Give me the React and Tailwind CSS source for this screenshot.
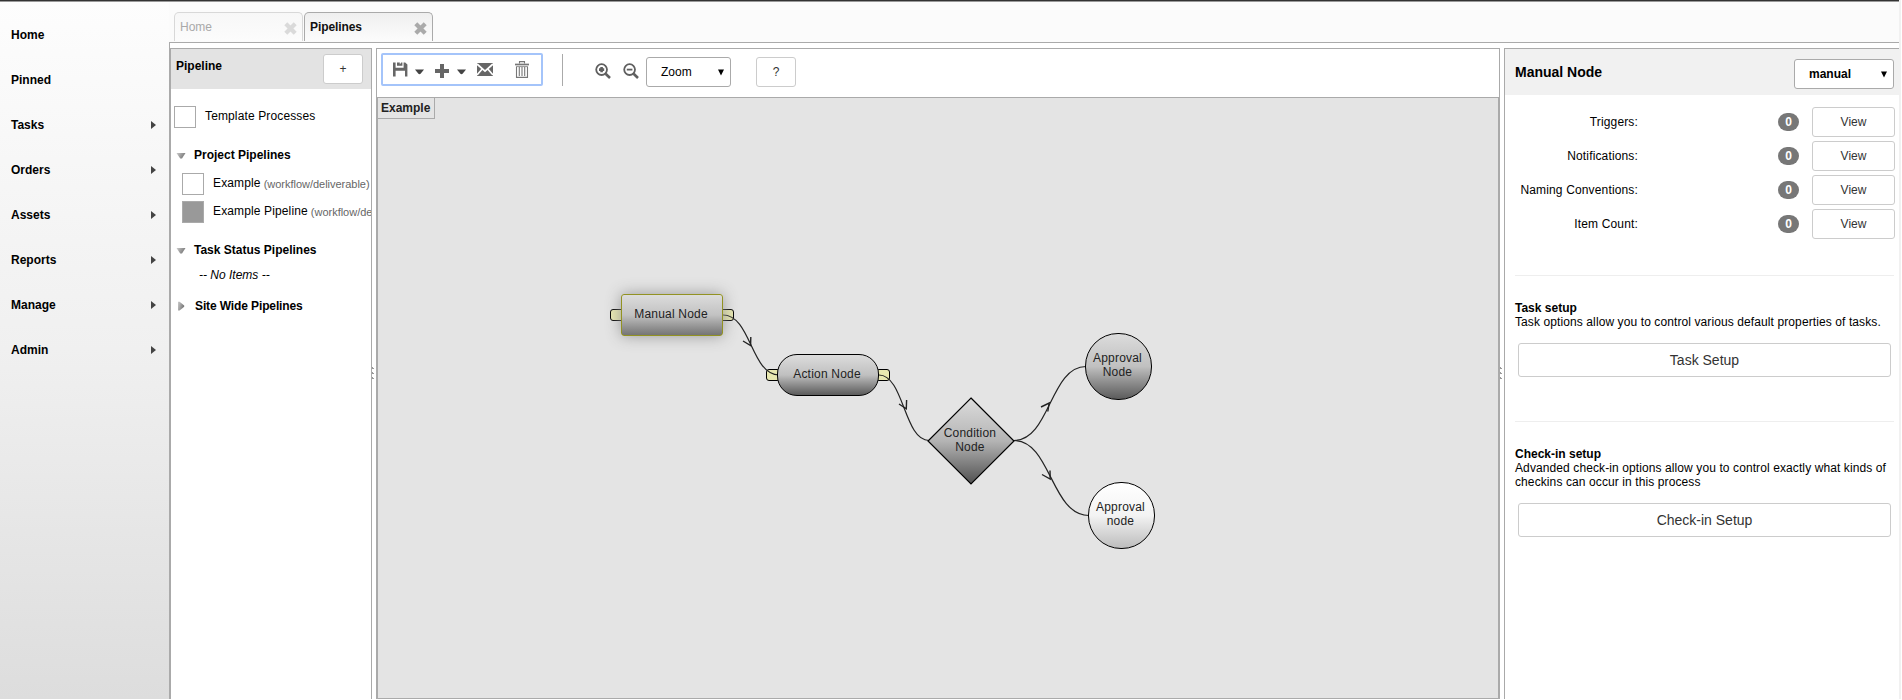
const NAV = [
  ['Home', false], ['Pinned', false], ['Tasks', true], ['Orders', true],
  ['Assets', true], ['Reports', true], ['Manage', true], ['Admin', true],
];

function Cross({ color }) {
  return (
    <svg width="13" height="13" viewBox="0 0 13 13">
      <path d="M1.8 1.8L11.2 11.2M11.2 1.8L1.8 11.2" stroke={color} strokeWidth="4.2" />
    </svg>
  );
}

function Tab({ label, active }) {
  return (
    <div
      className={
        'flex h-[29px] w-[129px] items-center justify-between rounded-t-[5px] border border-b-0 pl-[5px] pr-[5px] ' +
        (active
          ? 'border-[#aaa] bg-linear-to-b from-[#efefef] to-[#fcfcfc] font-bold tracking-[-0.08px] text-[#111]'
          : 'border-[#d8d8d8] bg-linear-to-b from-[#f7f7f7] to-[#fcfcfc] text-[#a9a9a9]')
      }
    >
      <span className="leading-[14px]">{label}</span>
      <span className="pt-[3px]"><Cross color={active ? '#aaa' : '#dadada'} /></span>
    </div>
  );
}

function Button({ className, children }) {
  return (
    <button className={'flex items-center justify-center rounded-[3px] border border-[#ccc] bg-white text-[#333] ' + className}>
      {children}
    </button>
  );
}

function Select({ className, children }) {
  return (
    <div className={'flex h-[30px] items-center justify-between rounded-[3px] border border-[#aaa] bg-white pl-[14px] pr-[6px] text-black ' + className}>
      <span>{children}</span>
      <svg width="6" height="7" viewBox="0 0 6 7"><path d="M0 0.5h6L3 6.5z" fill="#000" /></svg>
    </div>
  );
}

function Twisty({ open }) {
  return (
    <svg width="10" height="10" viewBox="0 0 10 10">
      <defs>
        <linearGradient id="tw" x1="0" y1="0" x2="1" y2="0.4">
          <stop offset="0" stopColor="#ccc" />
          <stop offset="1" stopColor="#777" />
        </linearGradient>
      </defs>
      {open ? <path d="M0.5 3h9L6 8.5H4.2z" fill="url(#tw)" /> : <path d="M2 0.8v8.6h1.6L8.2 5.8V4.4L3.6 0.8z" fill="url(#tw)" />}
    </svg>
  );
}

function Section({ label, open, className }) {
  return (
    <div className={'flex h-[14px] items-center pl-[5px] font-bold text-black ' + className}>
      <Twisty open={open} />
      <span className={open ? 'pl-[8px]' : 'pl-[9px] tracking-[-0.12px]'}>{label}</span>
    </div>
  );
}

function Entry({ label, path, filled, className }) {
  return (
    <div className={'flex h-[22px] items-start whitespace-nowrap text-black ' + className}>
      <span className={'size-[22px] shrink-0 border border-[#aaa] ' + (filled ? 'bg-[#999]' : 'bg-white')} />
      <span className="pl-[9px] pt-[3px] tracking-[0.13px]">
        {label}
        {path && <span className="relative top-px text-[11px] tracking-[-0.02px] text-[#666]"> {path}</span>}
      </span>
    </div>
  );
}

function Caret() {
  return <svg width="9" height="6" viewBox="0 0 9 6"><path d="M0 0.5h9L5.8 4.6Q4.5 6 3.2 4.6z" fill="#444" /></svg>;
}

function ZoomIcon({ minus }) {
  return (
    <svg width="16" height="16" viewBox="0 0 16 16" fill="none">
      <circle cx="6.6" cy="6.6" r="5.4" stroke="#5f5f5f" strokeWidth="1.8" />
      <path d="M10.6 10.8L15 15" stroke="#5f5f5f" strokeWidth="2.6" />
      {minus
        ? <path d="M3.8 6.6h5.6" stroke="#5f5f5f" strokeWidth="1.8" />
        : <path d="M4 6.6h5.2M6.6 4v5.2" stroke="#5f5f5f" strokeWidth="2.6" />}
    </svg>
  );
}

function Toolbar() {
  return (
    <div className="flex h-[48px] shrink-0 bg-white pl-[4px] pt-[4px]">
      <div className="flex h-[33px] w-[162px] items-start rounded-[2px] border-2 border-[#a4c4fa]">
        <svg className="ml-[10px] mt-[7px] shrink-0" width="15" height="15" viewBox="0 0 15 15">
          <path d="M0 0.5h2.6v5.2h8V0.5h1.6L14.4 2.4V14.5H12V8.7H2.6V14.5H0z" fill="#666" />
          <path d="M4 0.5h2.8v3.2h-2.8zM8.2 0.5h1.2v3.2H6z" fill="#666" />
        </svg>
        <span className="ml-[7px] mt-[14px] flex"><Caret /></span>
        <svg className="ml-[11px] mt-[9px] shrink-0" width="14" height="14" viewBox="0 0 14 14">
          <path d="M5 0h4v5h5v4H9v5H5V9H0V5h5z" fill="#666" />
        </svg>
        <span className="ml-[8px] mt-[14px] flex"><Caret /></span>
        <svg className="ml-[11px] mt-[8px] shrink-0" width="16" height="13" viewBox="0 0 16 13">
          <path d="M0 0h16v13H0z" fill="#666" />
          <path d="M0 1L8 8.2L16 1M0 12L5.2 6M16 12L10.8 6" fill="none" stroke="#fff" strokeWidth="1.7" />
        </svg>
        <svg className="ml-[22px] mt-[6px] shrink-0" width="14" height="17" viewBox="0 0 14 17" fill="none" stroke="#777">
          <path d="M4.5 2.5V0.6h5v1.9" strokeWidth="1.1" />
          <path d="M0 3.5h14" strokeWidth="1.7" />
          <path d="M1.5 5.5V16.4h11V5.5" strokeWidth="1.1" />
          <path d="M4.3 6v9M7 6v9M9.7 6v9" strokeWidth="1.1" />
          <path d="M1.5 5.6h11" strokeWidth="0.8" />
        </svg>
      </div>
      <div className="ml-[19px] mt-px h-[32px] w-px bg-[#aaa]" />
      <div className="ml-[32px] mt-[10px] flex gap-[12px]">
        <ZoomIcon />
        <ZoomIcon minus />
      </div>
      <Select className="ml-[7px] mt-[4px] w-[85px]">Zoom</Select>
      <Button className="ml-[25px] mt-[4px] h-[30px] w-[40px]">?</Button>
    </div>
  );
}

const EDGES = [
  'M345 217C373 217 373 277 401 277',
  'M501 277C526 277 526 342.5 551 342.5',
  'M636 342.5C672 342.5 672 268.5 708 268.5',
  'M636 342.5C673 342.5 673 417.5 711 417.5',
];
const HEADS = [
  'M365 243L372.6 247.5L372.8 239',
  'M521 306L528.3 310.8L528.6 302',
  'M663 309L671.2 305L669.8 313.5',
  'M664 376.5L672.2 381L672 372.5',
];

function Node({ className, children }) {
  return (
    <div className={'absolute flex flex-col items-center justify-center border pr-[2px] text-center leading-[14px] tracking-[0.2px] text-[#222] ' + className}>
      {children}
    </div>
  );
}

const DARK = 'bg-linear-to-b from-[#dcdcdc] via-[#c0c0c0] to-[#5c5c5c] ';

function Canvas() {
  return (
    <div className="relative flex-1 overflow-hidden border border-[#aaa] bg-[#e4e4e4]">
      <div className="absolute left-0 top-0 flex h-[21px] w-[57px] items-start border-b border-r border-[#aaa] pl-[3px] pt-[3px] font-bold leading-[14px] text-[#222]">
        Example
      </div>
      <div className="absolute left-[232px] top-[211px] h-[12px] w-[14px] rounded-[3px] border border-black bg-[#e8e8b0]" />
      <div className="absolute left-[342px] top-[211px] h-[12px] w-[14px] rounded-[3px] border border-black bg-[#e8e8b0]" />
      <div className="absolute left-[388px] top-[271px] h-[12px] w-[14px] rounded-[3px] border border-black bg-[#e8e8b0]" />
      <div className="absolute left-[498px] top-[271px] h-[12px] w-[14px] rounded-[3px] border border-black bg-[#e8e8b0]" />
      <svg className="absolute left-0 top-0" width="1119" height="600" fill="none" stroke="#222">
        <defs>
          <linearGradient id="dm" x1="0" y1="0" x2="0" y2="1">
            <stop offset="0" stopColor="#dcdcdc" />
            <stop offset="0.5" stopColor="#b4b4b4" />
            <stop offset="1" stopColor="#505050" />
          </linearGradient>
        </defs>
        {EDGES.map((d) => <path key={d} d={d} strokeWidth="1.2" />)}
        {HEADS.map((d) => <path key={d} d={d} strokeWidth="1.4" />)}
        <path d="M593 300L636 343L593 386L550 343Z" fill="url(#dm)" stroke="#000" strokeWidth="1.2" />
      </svg>
      <Node className="left-[243px] top-[196px] h-[42px] w-[102px] rounded-[3px] border-[#929222] bg-linear-to-b from-[#dcdcdc] via-[#c2c2c2] to-[#757575] pb-[3px] shadow-[0_0_15px_#999]">Manual Node</Node>
      <Node className={'left-[399px] top-[256px] h-[42px] w-[102px] rounded-[20px] border-black pb-[3px] ' + DARK}>Action Node</Node>
      <Node className={'left-[707px] top-[235px] size-[67px] rounded-[33px] border-black pb-[3px] ' + DARK}>
        <span>Approval</span><span>Node</span>
      </Node>
      <Node className="left-[710px] top-[384px] size-[67px] rounded-[33px] border-black bg-linear-to-b from-white via-[#f3f3f3] to-[#bdbdbd] pb-[3px]">
        <span>Approval</span><span>node</span>
      </Node>
      <Node className="left-[550px] top-[300px] size-[86px] border-transparent pb-[3px]">
        <span>Condition</span><span>Node</span>
      </Node>
    </div>
  );
}

function Splitter() {
  return (
    <div className="relative w-[4px] shrink-0 bg-white">
      <div className="absolute left-0 top-[319px] flex flex-col gap-[3px]">
        {[0, 1, 2].map((i) => <span key={i} className="size-[2px] border-b border-l border-[#999]" />)}
      </div>
    </div>
  );
}

function CountRow({ label }) {
  return (
    <div className="flex h-[30px] items-center">
      <span className="w-[133px] text-right tracking-[0.15px] text-black">{label}</span>
      <span className="ml-[140px] flex h-[18px] w-[21px] items-center justify-center rounded-full bg-[#777] font-bold text-white">0</span>
      <Button className="ml-[13px] h-[30px] w-[83px]">View</Button>
    </div>
  );
}

function Setup({ title, text, action, className }) {
  return (
    <div className={'ml-[10px] w-[379px] border-t border-[#eee] pt-[25px] text-black ' + className}>
      <div className="font-bold">{title}</div>
      <div className="whitespace-pre tracking-[0.1px]">{text}</div>
      <Button className="ml-[3px] mt-[14px] h-[34px] w-[373px] text-[14px]">{action}</Button>
    </div>
  );
}

export default function App() {
  return (
    <div className="h-[700px] w-[1902px] overflow-hidden bg-white font-['Liberation_Sans',Arial,sans-serif] text-[12px] leading-[14px]">
      <div className="flex h-[699px] w-[1901px] bg-linear-to-b from-[#fdfdfd] via-[#f0f0f0] to-[#dddddd]">
        <div className="flex w-[1899px] flex-col border-t border-[#333]">
          <div className="h-px shrink-0 bg-[#999]" />
          <div className="flex min-h-0 flex-1">
            <nav className="flex w-[169px] shrink-0 flex-col pt-[10px] font-bold text-black">
              {NAV.map(([label, more]) => (
                <div key={label} className="flex h-[45px] items-center justify-between pl-[11px] pr-[13px]">
                  <span>{label}</span>
                  {more && <svg width="5" height="8" viewBox="0 0 5 8"><path d="M0 0L5 4L0 8z" fill="#444" /></svg>}
                </div>
              ))}
            </nav>
            <div className="flex min-w-0 flex-1 flex-col">
              <div className="flex h-[40px] shrink-0 gap-px bg-[#fbfbfb] pl-[5px] pt-[10px]">
                <Tab label="Home" />
                <Tab label="Pipelines" active />
              </div>
              <div className="flex min-h-0 flex-1 border-l border-t border-[#aaa] bg-white pt-[5px]">
                <aside className="w-[202px] shrink-0 overflow-hidden border border-b-0 border-[#aaa]">
                  <div className="flex h-[40px] items-start justify-between bg-[#e3e3e3] pl-[5px] pr-[8px] pt-[5px]">
                    <span className="pt-[5px] font-bold text-black">Pipeline</span>
                    <Button className="h-[30px] w-[40px]">+</Button>
                  </div>
                  <Entry label="Template Processes" className="mt-[17px] pl-[3px]" />
                  <Section label="Project Pipelines" open className="mt-[20px]" />
                  <Entry label="Example" path="(workflow/deliverable)" className="mt-[11px] pl-[11px]" />
                  <Entry label="Example Pipeline" path="(workflow/deliverable)" filled className="mt-[6px] pl-[11px]" />
                  <Section label="Task Status Pipelines" open className="mt-[20px]" />
                  <div className="mt-[11px] pl-[28px] italic text-black">-- No Items --</div>
                  <Section label="Site Wide Pipelines" className="mt-[17px]" />
                </aside>
                <Splitter />
                <main className="flex w-[1124px] shrink-0 flex-col border border-b-0 border-[#aaa]">
                  <Toolbar />
                  <Canvas />
                </main>
                <Splitter />
                <section className="flex min-w-0 flex-1 flex-col border-l border-t border-[#aaa]">
                  <header className="flex h-[46px] shrink-0 items-center justify-between bg-[#f1f1f1] pl-[10px] pr-[5px] font-bold text-black">
                    <span className="text-[14px]">Manual Node</span>
                    <Select className="mt-[4px] w-[100px]">manual</Select>
                  </header>
                  <div className="mt-[12px] flex flex-col gap-[4px]">
                    {['Triggers:', 'Notifications:', 'Naming Conventions:', 'Item Count:'].map((l) => <CountRow key={l} label={l} />)}
                  </div>
                  <Setup
                    className="mt-[36px]"
                    title="Task setup"
                    text="Task options allow you to control various default properties of tasks."
                    action="Task Setup"
                  />
                  <Setup
                    className="mt-[44px]"
                    title="Check-in setup"
                    text={'Advanded check-in options allow you to control exactly what kinds of\ncheckins can occur in this process'}
                    action="Check-in Setup"
                  />
                </section>
              </div>
            </div>
          </div>
        </div>
        <div className="w-[2px] bg-[#f1f1f1]" />
      </div>
    </div>
  );
}
